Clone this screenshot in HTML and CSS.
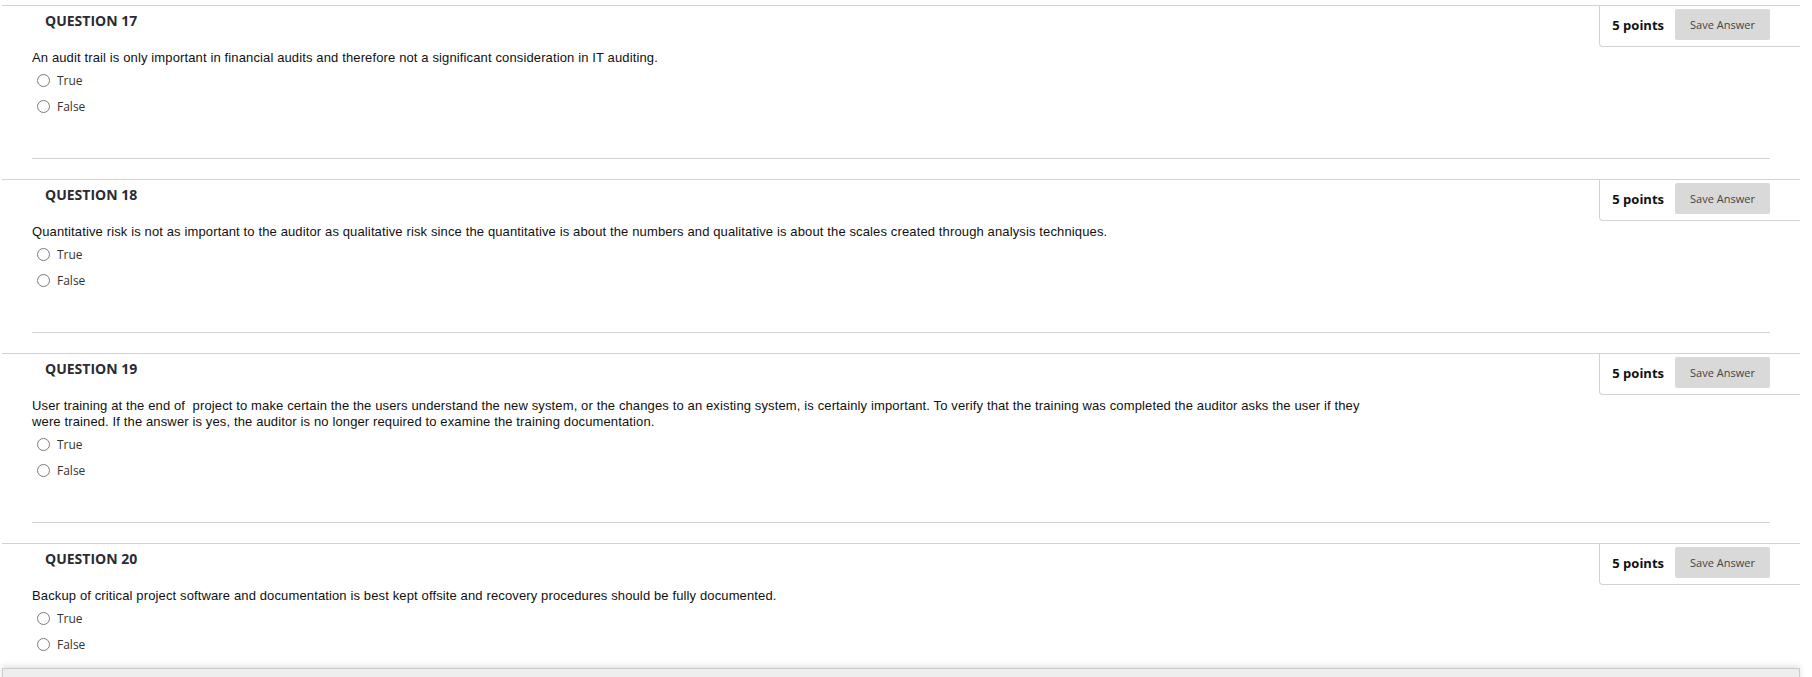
FILE: index.html
```html
<!DOCTYPE html>
<html>
<head>
<meta charset="utf-8">
<link rel="stylesheet" href="styles.css">
</head>
<body>
<div class="page">
  <div class="question">
    <div class="q-header">
      <h3 class="q-title">QUESTION 17</h3>
      <div class="points-box">
        <span class="points">5 points</span>
        <span class="save-btn">Save Answer</span>
      </div>
    </div>
    <div class="q-body">
      <div class="q-text">An audit trail is only important in financial audits and therefore not a significant consideration in IT auditing.</div>
      <div class="option"><span class="radio"></span><span class="opt-label">True</span></div>
      <div class="option"><span class="radio"></span><span class="opt-label">False</span></div>
    </div>
    <div class="separator"></div>
  </div>

  <div class="question">
    <div class="q-header">
      <h3 class="q-title">QUESTION 18</h3>
      <div class="points-box">
        <span class="points">5 points</span>
        <span class="save-btn">Save Answer</span>
      </div>
    </div>
    <div class="q-body">
      <div class="q-text">Quantitative risk is not as important to the auditor as qualitative risk since the quantitative is about the numbers and qualitative is about the scales created through analysis techniques.</div>
      <div class="option"><span class="radio"></span><span class="opt-label">True</span></div>
      <div class="option"><span class="radio"></span><span class="opt-label">False</span></div>
    </div>
    <div class="separator"></div>
  </div>

  <div class="question">
    <div class="q-header">
      <h3 class="q-title">QUESTION 19</h3>
      <div class="points-box">
        <span class="points">5 points</span>
        <span class="save-btn">Save Answer</span>
      </div>
    </div>
    <div class="q-body">
      <div class="q-text">User training at the end of&nbsp; project to make certain the the users understand the new system, or the changes to an existing system, is certainly important. To verify that the training was completed the auditor asks the user if they were trained. If the answer is yes, the auditor is no longer required to examine the training documentation.</div>
      <div class="option"><span class="radio"></span><span class="opt-label">True</span></div>
      <div class="option"><span class="radio"></span><span class="opt-label">False</span></div>
    </div>
    <div class="separator"></div>
  </div>

  <div class="question">
    <div class="q-header">
      <h3 class="q-title">QUESTION 20</h3>
      <div class="points-box">
        <span class="points">5 points</span>
        <span class="save-btn">Save Answer</span>
      </div>
    </div>
    <div class="q-body">
      <div class="q-text">Backup of critical project software and documentation is best kept offsite and recovery procedures should be fully documented.</div>
      <div class="option"><span class="radio"></span><span class="opt-label">True</span></div>
      <div class="option"><span class="radio"></span><span class="opt-label">False</span></div>
    </div>
  </div>
</div>
<div class="bottom-bar"></div>
</body>
</html>
```

FILE: styles.css
```css
html, body {
  margin: 0;
  padding: 0;
  background: #ffffff;
  overflow: hidden;
}

.page {
  width: 1798px;
  margin-left: 2px;
  padding-top: 5px;
}

.question {
  border-top: 1px solid #d2d2d2;
  margin-bottom: 20px;
}

.q-header {
  display: flex;
  justify-content: space-between;
  align-items: flex-start;
}

.q-title {
  margin: 5px 0 0 43px;
  font-family: "Open Sans", sans-serif;
  font-weight: 700;
  font-size: 14px;
  line-height: 19px;
  color: #2b2b33;
}

.points-box {
  display: flex;
  align-items: center;
  gap: 11px;
  padding: 3px 30px 6px 12px;
  border-left: 1px solid #d2d2d2;
  border-bottom: 1px solid #d2d2d2;
  border-bottom-left-radius: 4px;
}

.points {
  font-family: "Open Sans", sans-serif;
  font-weight: 700;
  font-size: 13px;
  color: #111111;
}

.save-btn {
  display: flex;
  align-items: center;
  justify-content: center;
  width: 95px;
  height: 31px;
  background: #d9d9d9;
  border-radius: 2px;
  font-family: "Open Sans", sans-serif;
  font-size: 11px;
  color: #444444;
}

.q-body {
  margin: 3px 0 0 30px;
}

.q-text {
  max-width: 1350px;
  font-family: "Liberation Sans", Arial, sans-serif;
  font-size: 13px;
  letter-spacing: 0.13px;
  line-height: 16px;
  color: #111111;
  margin-bottom: 2px;
}

.option {
  display: flex;
  align-items: center;
  height: 25px;
  padding-left: 5px;
}

.option + .option {
  margin-top: 1px;
}

.radio {
  box-sizing: border-box;
  width: 13px;
  height: 13px;
  border: 1px solid #7a7a7a;
  border-radius: 50%;
  background: #ffffff;
  margin-right: 7px;
}

.opt-label {
  font-family: "Open Sans", sans-serif;
  font-size: 12px;
  color: #333333;
}

.separator {
  height: 1px;
  background: #d2d2d2;
  margin: 39px 30px 0 30px;
}

.bottom-bar {
  position: fixed;
  left: 2px;
  top: 668px;
  width: 1796px;
  height: 60px;
  background: #eeeeee;
  border: 1px solid #cccccc;
  box-shadow: 0 -2px 6px rgba(0, 0, 0, 0.12);
}
```
